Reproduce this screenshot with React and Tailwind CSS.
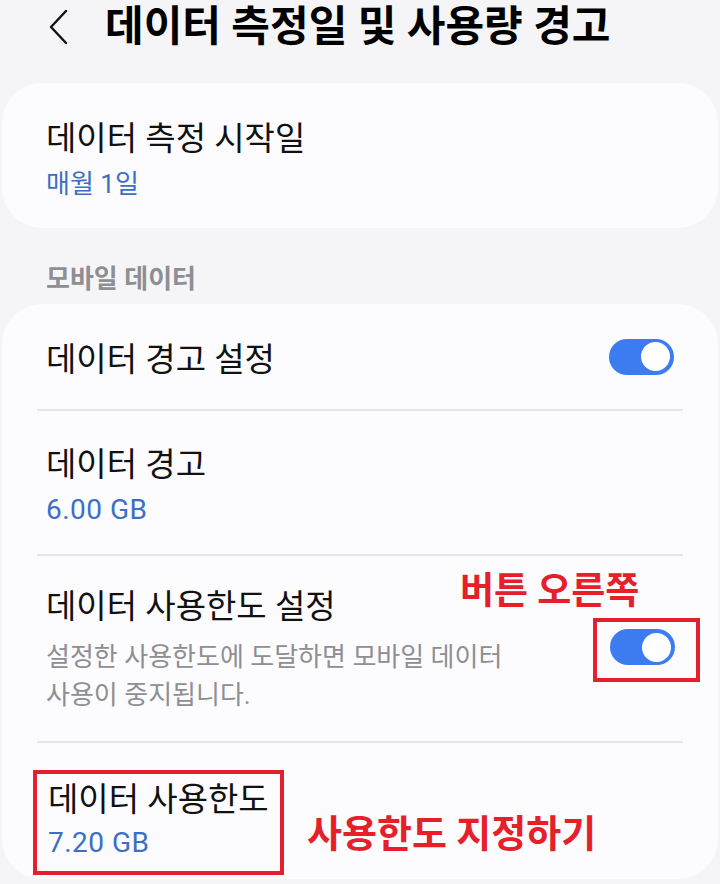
const font = { fontFamily: 'Roboto, "Noto Sans CJK KR", sans-serif' };

function Toggle() {
  return (
    <div className="w-[65px] h-[36px] rounded-full bg-[#3b7cf0] flex items-center justify-end pr-[4px]">
      <div className="w-[29px] h-[29px] rounded-full bg-white" />
    </div>
  );
}

function Divider() {
  return <div className="mx-[35px] h-[2px] bg-[#e6e6ea]" />;
}

export default function App() {
  return (
    <div style={font} className="w-[720px] h-[884px] bg-[#f5f5f7] overflow-hidden">
      {/* Header */}
      <div className="h-[54px] flex items-center">
        <svg className="ml-[48px]" width="20" height="36" viewBox="0 0 20 36" fill="none">
          <path d="M18 2 L3 18 L18 34" stroke="#111" strokeWidth="2.4" strokeLinecap="round" strokeLinejoin="round" />
        </svg>
        <h1 className="ml-[37px] text-[42px] font-bold text-black leading-none">
          데이터 측정일 및 사용량 경고
        </h1>
      </div>

      {/* Card 1 */}
      <div className="mt-[29px] mx-[2px] rounded-[40px] bg-[#fcfcfe] h-[145px] px-[44px] pt-[37px]">
        <div className="text-[33px] leading-[38px] text-[#111]">데이터 측정 시작일</div>
        <div className="mt-[11px] text-[26px] leading-[30px] text-[#3c6fc4]">매월 1일</div>
      </div>

      <div className="px-[46px] pt-[36px] pb-[10px] text-[26px] leading-[30px] font-bold text-[#8e8e93]">
        모바일 데이터
      </div>

      {/* Card 2 */}
      <div className="mx-[2px] rounded-[40px] bg-[#fcfcfe] h-[575px]">
        <div className="h-[105px] px-[44px] flex items-center justify-between pt-[2px]">
          <div className="mt-[4px] text-[33px] leading-[38px] text-[#111]">데이터 경고 설정</div>
          <div className="-mt-[2px]">
            <Toggle />
          </div>
        </div>
        <Divider />
        <div className="h-[143px] px-[44px] pt-[35px]">
          <div className="text-[33px] leading-[38px] text-[#111]">데이터 경고</div>
          <div className="mt-[11px] text-[28px] leading-[30px] tracking-[0.5px] text-[#3c6fc4]">6.00 GB</div>
        </div>
        <Divider />
        <div className="relative h-[185px] pl-[44px] pr-[18px] pt-[32px] flex justify-between">
          <div>
            <div className="text-[33px] leading-[38px] text-[#111]">데이터 사용한도 설정</div>
            <div className="mt-[12px] text-[26px] leading-[38px] text-[#8e8e93]">
              설정한 사용한도에 도달하면 모바일 데이터
              <br />
              사용이 중지됩니다.
            </div>
          </div>
          <div className="mt-[30px] self-start border-[4px] border-[#e5202a] pl-[13px] pr-[21px] pt-[7px] pb-[13px]">
            <Toggle />
          </div>
          <div className="absolute left-[458px] top-[16px] text-[37px] leading-[40px] font-bold text-[#e5202a]">
            버튼 오른쪽
          </div>
        </div>
        <Divider />
        <div className="relative h-[140px] pl-[31px] pt-[27px]">
          <div className="w-[251px] border-[4px] border-[#e5202a] pl-[11px] pt-[7px] pb-[13px]">
            <div className="text-[33px] leading-[38px] text-[#111]">데이터 사용한도</div>
            <div className="mt-[9px] text-[28px] leading-[30px] tracking-[0.5px] text-[#3c6fc4]">7.20 GB</div>
          </div>
          <div className="absolute left-[305px] top-[70px] text-[38px] leading-[42px] font-bold text-[#e5202a]">
            사용한도 지정하기
          </div>
        </div>
      </div>
    </div>
  );
}
